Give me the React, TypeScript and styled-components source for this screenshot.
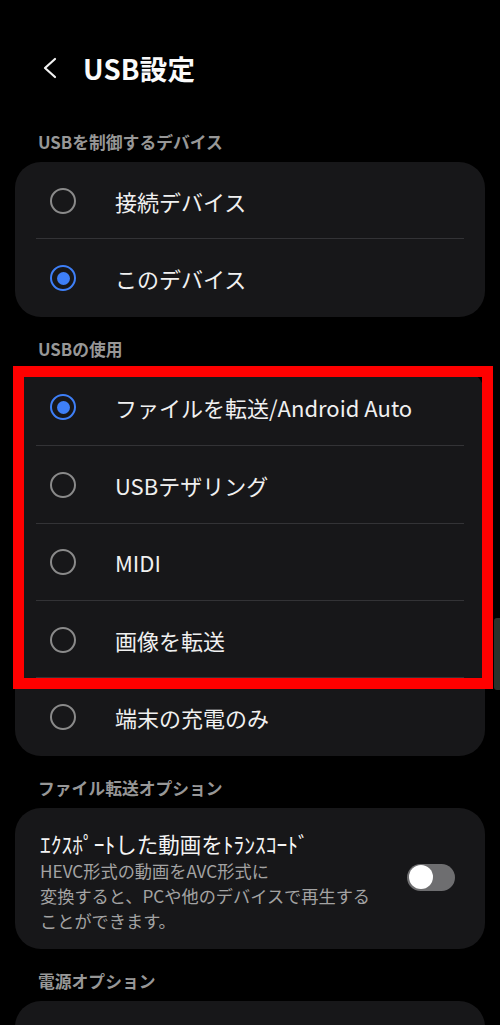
import React from 'react'
import styled, { createGlobalStyle } from 'styled-components'

const GlobalStyle = createGlobalStyle`
  html, body {
    margin: 0;
    padding: 0;
    background: #000;
    overflow: hidden;
  }
  body {
    font-family: "Noto Sans CJK JP", "Noto Sans", sans-serif;
    color: #f2f2f2;
  }
`

const Page = styled.div`
  position: relative;
  width: 500px;
  height: 1025px;
  overflow: hidden;
  background: #000;
`

const TopBar = styled.div`
  display: flex;
  align-items: center;
  height: 110px;
  padding: 48px 0 22px 40px;
  box-sizing: border-box;
`

const BackButton = styled.div`
  display: flex;
  align-items: center;
  justify-content: center;
  width: 18px;
  height: 24px;
  margin-right: 25px;
`

const Title = styled.h1`
  margin: 0;
  font-size: 27.5px;
  font-weight: 700;
  color: #fafafa;
  letter-spacing: 0.2px;
`

const Content = styled.div`
  padding: 0 15px;
`

const SectionLabel = styled.div`
  padding: 22px 23px 10px;
  line-height: 20px;
  font-size: 16.8px;
  font-weight: 700;
  color: #979797;
`

const Card = styled.div`
  position: relative;
  background: #171719;
  border-radius: 26px;
`

const Row = styled.div<{ $divider?: boolean }>`
  position: relative;
  display: flex;
  align-items: center;
  height: 77.4px;
  padding-left: 35px;

  &::after {
    content: '';
    display: ${(p) => (p.$divider ? 'block' : 'none')};
    position: absolute;
    left: 21px;
    right: 21px;
    bottom: 0;
    height: 1px;
    background: #333336;
  }
`

const Radio = styled.span<{ $checked?: boolean }>`
  box-sizing: border-box;
  display: inline-flex;
  align-items: center;
  justify-content: center;
  width: 26px;
  height: 26px;
  border-radius: 50%;
  border: 2.5px solid ${(p) => (p.$checked ? '#3e7ff7' : '#8a8a8a')};
  margin-right: 39px;

  &::before {
    content: '';
    display: ${(p) => (p.$checked ? 'block' : 'none')};
    width: 13px;
    height: 13px;
    border-radius: 50%;
    background: #3e7ff7;
  }
`

const RowText = styled.span`
  font-size: 22px;
  color: #f0f0f0;
`

const Highlight = styled.div`
  position: absolute;
  top: -3px;
  left: -2px;
  width: 480px;
  height: 323px;
  box-sizing: border-box;
  border: 11px solid #ff0000;
  pointer-events: none;
`

const OptionCard = styled(Card)`
  display: flex;
  align-items: center;
  padding: 22px 30px 16px 25px;
`

const OptionBody = styled.div`
  flex: 1;
`

const OptionTitle = styled.div`
  font-size: 21.5px;
  line-height: 28px;
  color: #f4f4f4;
`

const OptionDesc = styled.div`
  font-size: 17.2px;
  line-height: 25px;
  color: #a3a3a3;
`

const Toggle = styled.div`
  position: relative;
  width: 48px;
  height: 27px;
  border-radius: 14px;
  background: #6e6e70;
  margin-top: -8px;
  flex-shrink: 0;

  &::before {
    content: '';
    position: absolute;
    top: 1.5px;
    left: 1.5px;
    width: 24px;
    height: 24px;
    border-radius: 50%;
    background: #fff;
  }
`

const PartialCard = styled(Card)`
  height: 80px;
`

const ScrollThumb = styled.div`
  position: absolute;
  right: 0;
  top: 618px;
  width: 6px;
  height: 72px;
  border-radius: 3px 0 0 3px;
  background: #2a312b;
`

const ChevronLeft = () => (
  <svg width="15" height="22" viewBox="0 0 15 22" fill="none">
    <path d="M13 2 L3 11 L13 20" stroke="#f2f2f2" strokeWidth="2.2" strokeLinecap="round" strokeLinejoin="round" />
  </svg>
)

const controlRows = [
  { label: '接続デバイス', checked: false },
  { label: 'このデバイス', checked: true },
]

const usageRows = [
  { label: 'ファイルを転送/Android Auto', checked: true },
  { label: 'USBテザリング', checked: false },
  { label: 'MIDI', checked: false },
  { label: '画像を転送', checked: false },
  { label: '端末の充電のみ', checked: false },
]

export default function App() {
  return (
    <Page>
      <GlobalStyle />
      <TopBar>
        <BackButton>
          <ChevronLeft />
        </BackButton>
        <Title>USB設定</Title>
      </TopBar>

      <Content>
        <SectionLabel>USBを制御するデバイス</SectionLabel>
        <Card>
          {controlRows.map((r, i) => (
            <Row key={r.label} $divider={i < controlRows.length - 1}>
              <Radio $checked={r.checked} />
              <RowText>{r.label}</RowText>
            </Row>
          ))}
        </Card>

        <SectionLabel>USBの使用</SectionLabel>
        <Card>
          {usageRows.map((r, i) => (
            <Row key={r.label} $divider={i < usageRows.length - 1}>
              <Radio $checked={r.checked} />
              <RowText>{r.label}</RowText>
            </Row>
          ))}
          <Highlight />
        </Card>

        <SectionLabel>ファイル転送オプション</SectionLabel>
        <OptionCard>
          <OptionBody>
            <OptionTitle>ｴｸｽﾎﾟｰﾄした動画をﾄﾗﾝｽｺｰﾄﾞ</OptionTitle>
            <OptionDesc>
              HEVC形式の動画をAVC形式に
              <br />
              変換すると、PCや他のデバイスで再生する
              <br />
              ことができます。
            </OptionDesc>
          </OptionBody>
          <Toggle />
        </OptionCard>

        <SectionLabel>電源オプション</SectionLabel>
        <PartialCard />
      </Content>

      <ScrollThumb />
    </Page>
  )
}
